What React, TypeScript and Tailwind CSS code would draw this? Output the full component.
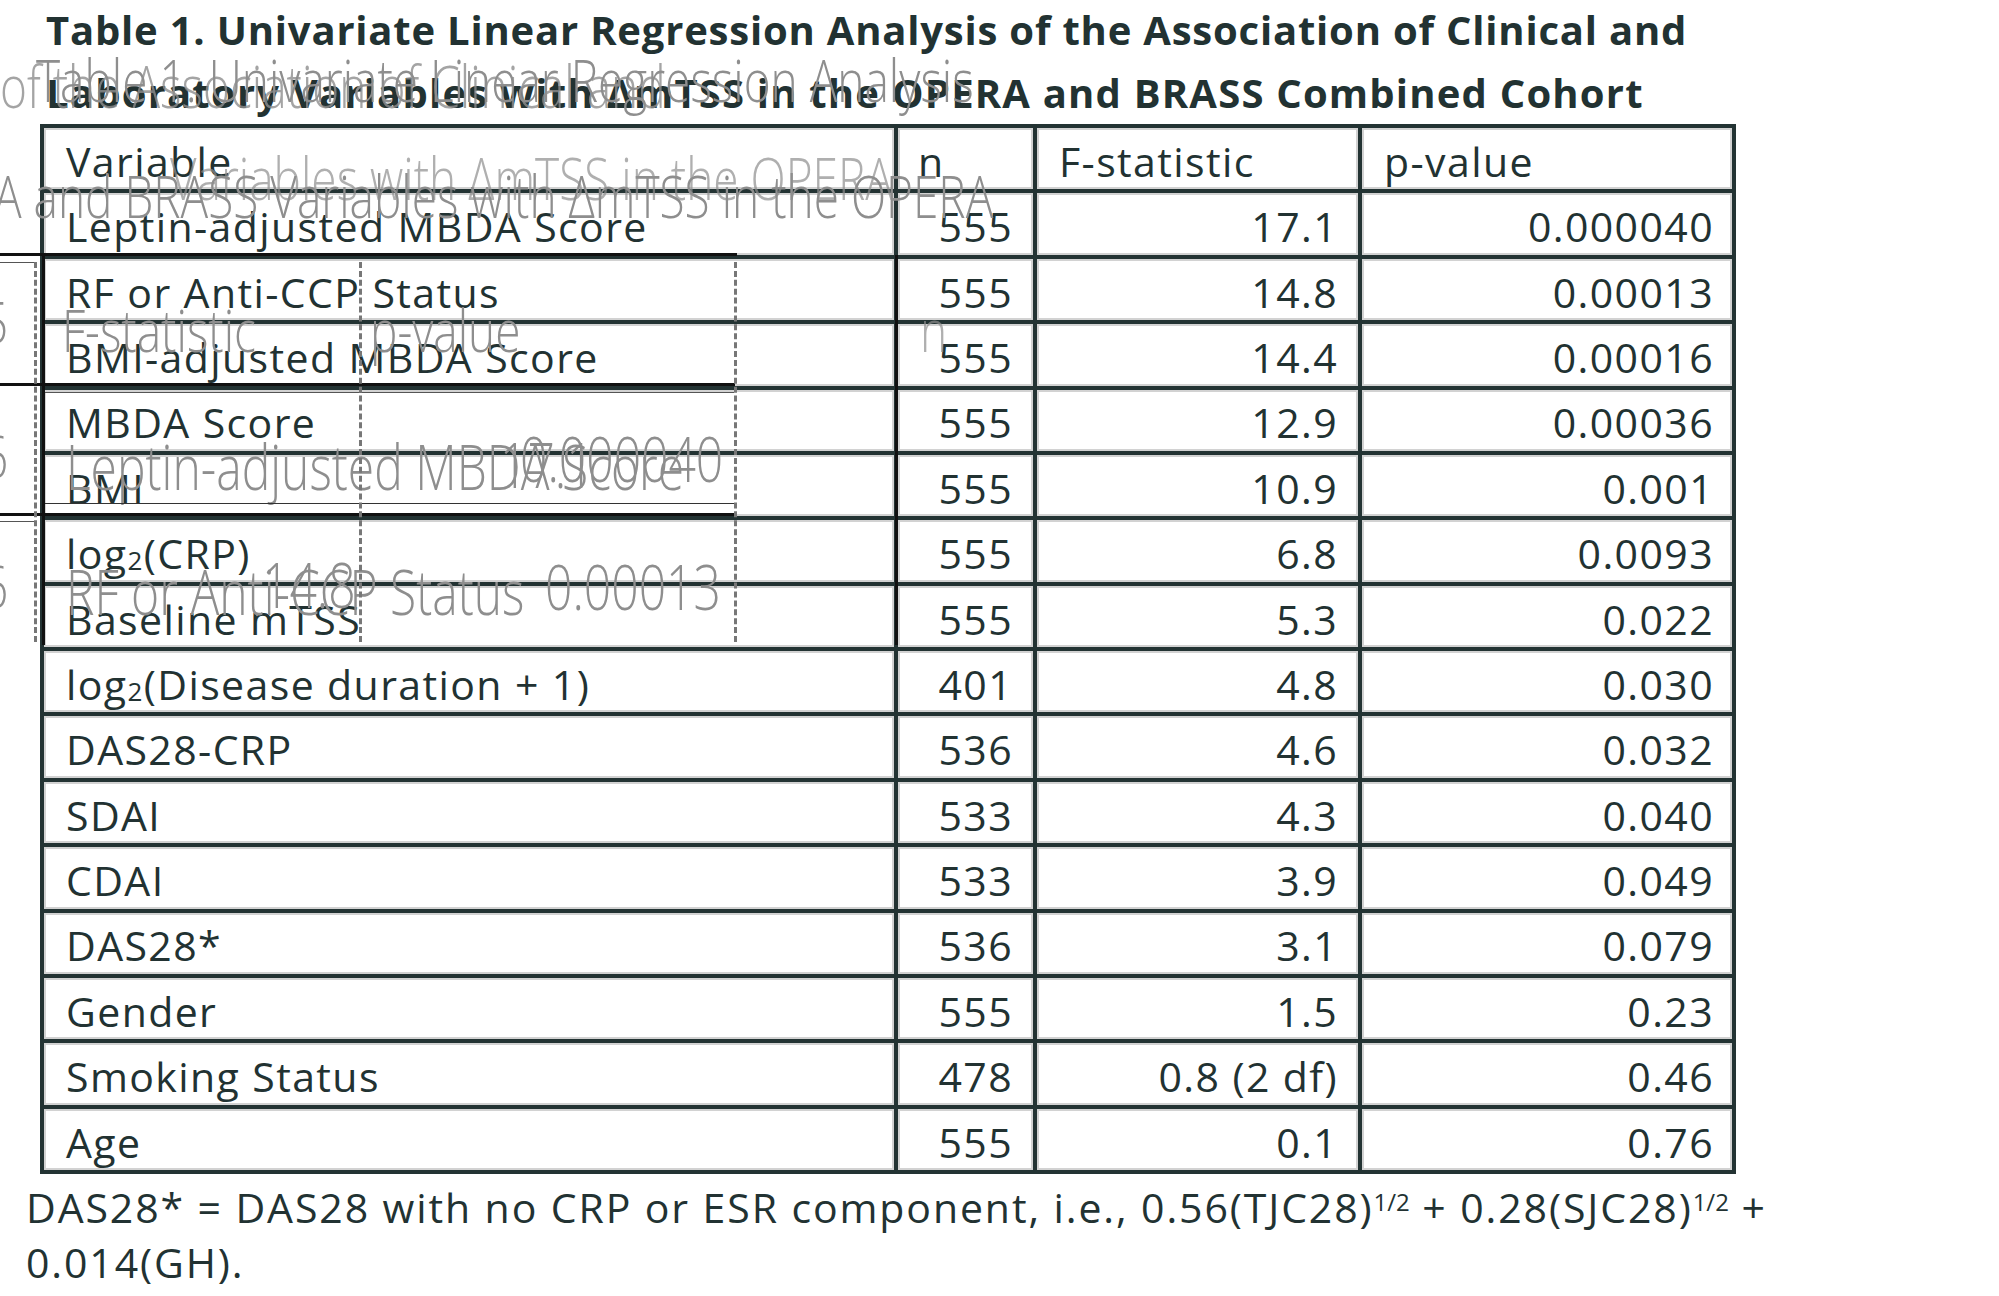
import React from "react";

type Row = { label: React.ReactNode; n: string; f: string; p: string };

const sub2 = <sub className="text-[26px] leading-none">2</sub>;

const rows: Row[] = [
  { label: "Leptin-adjusted MBDA Score", n: "555", f: "17.1", p: "0.000040" },
  { label: "RF or Anti-CCP Status", n: "555", f: "14.8", p: "0.00013" },
  { label: "BMI-adjusted MBDA Score", n: "555", f: "14.4", p: "0.00016" },
  { label: "MBDA Score", n: "555", f: "12.9", p: "0.00036" },
  { label: "BMI", n: "555", f: "10.9", p: "0.001" },
  { label: <>log{sub2}(CRP)</>, n: "555", f: "6.8", p: "0.0093" },
  { label: "Baseline mTSS", n: "555", f: "5.3", p: "0.022" },
  { label: <>log{sub2}(Disease duration + 1)</>, n: "401", f: "4.8", p: "0.030" },
  { label: "DAS28-CRP", n: "536", f: "4.6", p: "0.032" },
  { label: "SDAI", n: "533", f: "4.3", p: "0.040" },
  { label: "CDAI", n: "533", f: "3.9", p: "0.049" },
  { label: "DAS28*", n: "536", f: "3.1", p: "0.079" },
  { label: "Gender", n: "555", f: "1.5", p: "0.23" },
  { label: "Smoking Status", n: "478", f: "0.8 (2 df)", p: "0.46" },
  { label: "Age", n: "555", f: "0.1", p: "0.76" },
];

const cell = "bg-white flex items-center pt-[6px] shadow-[inset_0_0_0_2px_#d2d2d2]";

// faint, stretched copy of the table that sits over the top-left of the scan
function Ghost() {
  const t = "absolute whitespace-nowrap text-[#8e8e8e] font-light tracking-normal origin-top-left scale-y-[1.3]";
  return (
    <div className="pointer-events-none absolute inset-0 overflow-hidden">
      <div className={t + " left-[36px] top-[34px] text-[46px]"}>Table 1. Univariate Linear Regression Analysis</div>
      <div className={t + " left-[0px] top-[40px] text-[46px] opacity-80"}>of the Association of Clinical and</div>
      <div className={t + " left-[170px] top-[132px] text-[46px] opacity-70"}>Variables with ΔmTSS in the OPERA</div>
      <div className={t + " left-[-6px] top-[150px] text-[46px]"}>A and BRASS Variables with ΔmTSS in the OPERA</div>

      <div className={t + " left-[-18px] top-[276px] text-[46px]"}>5</div>
      <div className={t + " left-[-18px] top-[410px] text-[46px]"}>6</div>
      <div className={t + " left-[-18px] top-[540px] text-[46px]"}>6</div>

      <div className={t + " left-[62px] top-[284px] text-[46px]"}>F-statistic</div>
      <div className={t + " left-[370px] top-[284px] text-[46px]"}>p-value</div>
      <div className={t + " left-[920px] top-[284px] text-[46px] opacity-70"}>n</div>
      <div className={t + " left-[66px] top-[420px] text-[48px]"}>Leptin-adjusted MBDA Score</div>
      <div className={t + " left-[500px] top-[418px] text-[48px]"}>17.1</div>
      <div className={t + " left-[520px] top-[412px] text-[48px]"}>0.000040</div>
      <div className={t + " left-[66px] top-[545px] text-[48px]"}>RF or Anti-CCP Status</div>
      <div className={t + " left-[262px] top-[538px] text-[48px]"}>14.8</div>
      <div className={t + " left-[545px] top-[540px] text-[48px]"}>0.00013</div>

      {/* ghost grid lines */}
      <div className="absolute left-0 top-[253px] h-[3px] w-[737px] bg-[#111]" />
      <div className="absolute left-0 top-[262px] h-px w-[36px] bg-[#555]" />
      <div className="absolute left-0 top-[383px] h-[3px] w-[735px] bg-[#111]" />
      <div className="absolute left-[44px] top-[392px] h-px w-[690px] bg-[#555]" />
      <div className="absolute left-[44px] top-[503px] h-px w-[690px] bg-[#333]" />
      <div className="absolute left-0 top-[513px] h-[3px] w-[735px] bg-[#111]" />
      <div className="absolute left-0 top-[521px] h-px w-[36px] bg-[#555]" />
      <div className="absolute left-[34px] top-[262px] h-[380px] border-l-[3px] border-dashed border-[#777]" />
      <div className="absolute left-[359px] top-[262px] h-[380px] border-l-[3px] border-dashed border-[#777]" />
      <div className="absolute left-[734px] top-[262px] h-[380px] border-l-[3px] border-dashed border-[#777]" />
      <div className="absolute left-[42px] top-[255px] h-[390px] w-[3px] bg-[#111]" />
      <div className="absolute left-[895px] top-[255px] h-[390px] w-[3px] bg-[#111]" />
    </div>
  );
}

export default function App() {
  return (
    <div className="relative w-[1999px] h-[1296px] bg-white overflow-hidden text-[#223232] font-['Open_Sans',sans-serif]">
      <h1 className="ml-[46px] -mt-[2px] text-[40px] font-bold leading-[63px] tracking-[0.8px]">
        Table 1. Univariate Linear Regression Analysis of the Association of Clinical and
        <br />
        <span className="tracking-[1.2px]">Laboratory Variables with ΔmTSS in the OPERA and BRASS Combined Cohort</span>
      </h1>

      <div className="ml-[40px] grid w-[1696px] grid-cols-[850px_135px_321px_370px] auto-rows-[61.375px] gap-[4px] bg-[#233333] p-[4px] text-[41px] font-medium tracking-[1.4px]">
        <div className={cell + " pl-[22px]"}>Variable</div>
        <div className={cell + " pl-[20px]"}>n</div>
        <div className={cell + " pl-[22px]"}>F-statistic</div>
        <div className={cell + " pl-[22px]"}>p-value</div>
        {rows.map((r, i) => (
          <React.Fragment key={i}>
            <div className={cell + " pl-[22px]"}>{r.label}</div>
            <div className={cell + " justify-end pr-[20px]"}>{r.n}</div>
            <div className={cell + " justify-end pr-[20px]"}>{r.f}</div>
            <div className={cell + " justify-end pr-[18px]"}>{r.p}</div>
          </React.Fragment>
        ))}
      </div>

      <p className="ml-[26px] mt-[6px] text-[41px] font-medium leading-[55px] tracking-[1.9px]">
        DAS28* = DAS28 with no CRP or ESR component, i.e., 0.56(TJC28)
        <sup className="text-[24px] tracking-normal">1/2</sup> + 0.28(SJC28)<sup className="text-[24px] tracking-normal">1/2</sup> +
        <br />
        0.014(GH).
      </p>

      <Ghost />
    </div>
  );
}
